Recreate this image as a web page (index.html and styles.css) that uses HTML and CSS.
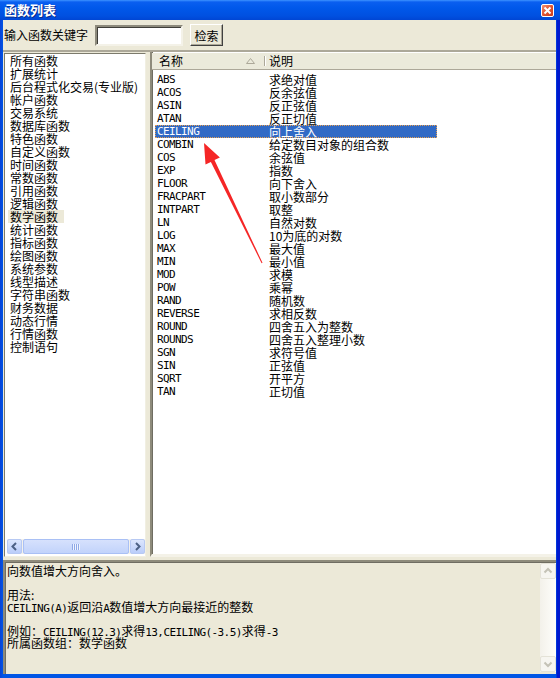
FILE: index.html
```html
<!DOCTYPE html>
<html lang="zh-CN">
  <head>
    <meta charset="UTF-8" />
    <title>函数列表</title>
    <link rel="stylesheet" href="styles.css">
  </head>
  <body>
    <div class="window">
      <div class="titlebar">
        <span class="title">函数列表</span>
        <span class="close">
          <svg width="13" height="13" viewBox="0 0 13 13">
            <defs>
              <linearGradient id="cg" x1="0" y1="0" x2="1" y2="1">
                <stop offset="0" stop-color="#F39678" />
                <stop offset="0.5" stop-color="#E25430" />
                <stop offset="1" stop-color="#C8381A" />
              </linearGradient>
            </defs>
            <rect x="0.5" y="0.5" width="12" height="12" rx="1.5" fill="url(#cg)" stroke="#fff" />
            <path d="M3.5 3.5 L9.5 9.5 M9.5 3.5 L3.5 9.5" stroke="#fff" stroke-width="2" />
          </svg>
        </span>
      </div>

      <div class="body">
        <div class="toolbar">
          <label for="keyword">输入函数关键字</label>
          <input type="text" id="keyword" class="search" />
          <button type="button" class="btn">检索</button>
        </div>

        <div class="main">
          <div class="groups">
            <ul class="group-list">
              <li><span>所有函数</span></li>
              <li><span>扩展统计</span></li>
              <li><span>后台程式化交易(专业版)</span></li>
              <li><span>帐户函数</span></li>
              <li><span>交易系统</span></li>
              <li><span>数据库函数</span></li>
              <li><span>特色函数</span></li>
              <li><span>自定义函数</span></li>
              <li><span>时间函数</span></li>
              <li><span>常数函数</span></li>
              <li><span>引用函数</span></li>
              <li><span>逻辑函数</span></li>
              <li class="current"><span>数学函数</span></li>
              <li><span>统计函数</span></li>
              <li><span>指标函数</span></li>
              <li><span>绘图函数</span></li>
              <li><span>系统参数</span></li>
              <li><span>线型描述</span></li>
              <li><span>字符串函数</span></li>
              <li><span>财务数据</span></li>
              <li><span>动态行情</span></li>
              <li><span>行情函数</span></li>
              <li><span>控制语句</span></li>
            </ul>
            <div class="hscroll">
              <span class="sb-btn">
                <svg width="15" height="15" viewBox="0 0 15 15"><path d="M9 4 L5.5 7.5 L9 11" fill="none" stroke="#4D6185" stroke-width="2" /></svg>
              </span>
              <span class="sb-thumb"><span class="grip"></span></span>
              <span class="sb-btn">
                <svg width="15" height="15" viewBox="0 0 15 15"><path d="M6 4 L9.5 7.5 L6 11" fill="none" stroke="#4D6185" stroke-width="2" /></svg>
              </span>
            </div>
          </div>

          <div class="funcs">
            <div class="head">
              <div class="col-name">
                名称
                <svg class="sort" width="9" height="6" viewBox="0 0 9 6"><path d="M4.5 0.5 L8.5 5.5 L0.5 5.5 Z" fill="none" stroke="#ACA899" /></svg>
              </div>
              <div class="col-desc">说明</div>
            </div>
            <div class="rows">
              <div class="row"><span class="name">ABS</span><span class="info">求绝对值</span></div>
              <div class="row"><span class="name">ACOS</span><span class="info">反余弦值</span></div>
              <div class="row"><span class="name">ASIN</span><span class="info">反正弦值</span></div>
              <div class="row"><span class="name">ATAN</span><span class="info">反正切值</span></div>
              <div class="row selected"><span class="name">CEILING</span><span class="info">向上舍入</span></div>
              <div class="row"><span class="name">COMBIN</span><span class="info">给定数目对象的组合数</span></div>
              <div class="row"><span class="name">COS</span><span class="info">余弦值</span></div>
              <div class="row"><span class="name">EXP</span><span class="info">指数</span></div>
              <div class="row"><span class="name">FLOOR</span><span class="info">向下舍入</span></div>
              <div class="row"><span class="name">FRACPART</span><span class="info">取小数部分</span></div>
              <div class="row"><span class="name">INTPART</span><span class="info">取整</span></div>
              <div class="row"><span class="name">LN</span><span class="info">自然对数</span></div>
              <div class="row"><span class="name">LOG</span><span class="info">10为底的对数</span></div>
              <div class="row"><span class="name">MAX</span><span class="info">最大值</span></div>
              <div class="row"><span class="name">MIN</span><span class="info">最小值</span></div>
              <div class="row"><span class="name">MOD</span><span class="info">求模</span></div>
              <div class="row"><span class="name">POW</span><span class="info">乘幂</span></div>
              <div class="row"><span class="name">RAND</span><span class="info">随机数</span></div>
              <div class="row"><span class="name">REVERSE</span><span class="info">求相反数</span></div>
              <div class="row"><span class="name">ROUND</span><span class="info">四舍五入为整数</span></div>
              <div class="row"><span class="name">ROUNDS</span><span class="info">四舍五入整理小数</span></div>
              <div class="row"><span class="name">SGN</span><span class="info">求符号值</span></div>
              <div class="row"><span class="name">SIN</span><span class="info">正弦值</span></div>
              <div class="row"><span class="name">SQRT</span><span class="info">开平方</span></div>
              <div class="row"><span class="name">TAN</span><span class="info">正切值</span></div>
            </div>
          </div>
        </div>

        <div class="desc">
          <div class="desc-text">
            <p>向数值增大方向舍入。</p>
            <p>&nbsp;</p>
            <p>用法:</p>
            <p><span class="en">CEILING(A)</span>返回沿<span class="en">A</span>数值增大方向最接近的整数</p>
            <p>&nbsp;</p>
            <p>例如：<span class="en">CEILING(12.3)</span>求得<span class="en">13,CEILING(-3.5)</span>求得<span class="en">-3</span></p>
            <p>所属函数组：数学函数</p>
          </div>
          <div class="vscroll">
            <span class="vs-btn">
              <svg width="14" height="14" viewBox="0 0 14 14"><path d="M3.5 8.5 L7 5 L10.5 8.5" fill="none" stroke="#C4C2B6" stroke-width="2" /></svg>
            </span>
            <span class="vs-track"></span>
            <span class="vs-btn">
              <svg width="14" height="14" viewBox="0 0 14 14"><path d="M3.5 5.5 L7 9 L10.5 5.5" fill="none" stroke="#C4C2B6" stroke-width="2" /></svg>
            </span>
          </div>
        </div>
      </div>

      <!-- red pointer drawn over the list -->
      <svg class="arrow" width="560" height="678" viewBox="0 0 560 678">
        <polygon points="204,143 219.9,157.5 214.5,160.1 262.5,262.8 261.6,263.2 210.9,161.9 205.5,164.5" fill="#F52626" />
      </svg>
    </div>
  </body>
</html>
```

FILE: styles.css
```css
* {
  margin: 0;
  padding: 0;
  box-sizing: border-box;
}

body {
  width: 560px;
  height: 678px;
  overflow: hidden;
  font-family: "Noto Sans CJK SC", sans-serif;
  font-size: 12px;
  color: #000;
}

.window {
  position: relative;
  width: 560px;
  height: 678px;
  background: linear-gradient(90deg, #0842D8 0, #0055E5 3px, #0055E5 556px, #0019CF 557px);
  display: flex;
  flex-direction: column;
}

/* Title bar */
.titlebar {
  height: 20px;
  flex: none;
  background: linear-gradient(#3D93FF 0, #0A5FF0 2px, #0058EA 40%, #0050E0 80%, #0046D4 100%);
  display: flex;
  align-items: center;
  justify-content: space-between;
  padding: 0 6px 0 4px;
}

.title {
  color: #fff;
  font-weight: bold;
  font-size: 13px;
  line-height: 20px;
  text-shadow: 1px 1px 0 #0A2C8A;
}

.close {
  display: flex;
  margin-top: 1px;
}

.body {
  flex: 1;
  margin: 0 4px 4px 3px;
  background: #ECE9D8;
  display: flex;
  flex-direction: column;
}

/* Search bar */
.toolbar {
  height: 30px;
  flex: none;
  display: flex;
  align-items: center;
  padding-left: 1px;
}

.toolbar label {
  line-height: 14px;
}

.search {
  margin-left: 7px;
  width: 88px;
  height: 21px;
  border: 2px solid;
  border-color: #8D8A7C #F4F2E8 #F4F2E8 #8D8A7C;
  box-shadow: inset 1px 1px 0 #3F3E38;
  background: #fff;
  outline: none;
}

.btn {
  margin-left: 7px;
  width: 33px;
  height: 22px;
  font-family: "Noto Sans CJK SC", sans-serif;
  font-size: 12px;
  background: #ECE9D8;
  border: 1px solid;
  border-color: #fff #404040 #404040 #fff;
  box-shadow: inset -1px -1px 0 #ACA899;
  color: #000;
}

/* Lists */
.main {
  height: 507px;
  flex: none;
  display: flex;
  border-top: 2px solid #ACA899;
}

.groups {
  width: 142px;
  margin: 1px 0 0 1px;
  background: #fff;
  border: 1px solid;
  border-color: #7C7A6C #F1EFE2 #F1EFE2 #7C7A6C;
  display: flex;
  flex-direction: column;
}

.group-list {
  flex: 1;
  list-style: none;
  padding-left: 3px;
}

.group-list li {
  height: 13px;
  line-height: 13px;
  white-space: nowrap;
}

.group-list li span {
  display: inline-block;
  padding: 0 6px 0 2px;
}

.group-list li.current span {
  background: #ECE9D8;
}

.hscroll {
  height: 15px;
  margin: 0 0 2px 2px;
  display: flex;
  background: #F3F1EC;
}

.sb-btn {
  width: 15px;
  height: 15px;
  display: flex;
  border: 1px solid #B7C9F3;
  border-radius: 2px;
  background: linear-gradient(#DCE6FD, #BACDFA);
}

.sb-btn svg {
  margin: -1px;
}

.sb-thumb {
  flex: 1;
  margin: 0 1px;
  border: 1px solid #A9C0F5;
  border-radius: 2px;
  background: linear-gradient(#D6E1FD, #C2D3FB);
  display: flex;
  justify-content: center;
  align-items: center;
}

.grip {
  width: 8px;
  height: 6px;
  background: repeating-linear-gradient(90deg, #8FA8E6 0, #8FA8E6 1px, #EEF3FF 1px, #EEF3FF 2px);
}

.funcs {
  flex: 1;
  margin-left: 4px;
  background: #fff;
  border-left: 2px solid;
  border-color: #8E8B7B;
  box-shadow: inset 1px 0 0 #6F6D62;
  border-bottom: 3px solid #F4F2E8;
}

.head {
  height: 17px;
  margin-top: 1px;
  display: flex;
  background: #EBEADB;
  border-bottom: 1px solid #ACA899;
  line-height: 16px;
}

.col-name {
  width: 112px;
  padding-left: 7px;
  display: flex;
  align-items: center;
}

.sort {
  margin-left: auto;
  margin-right: 9px;
}

.col-desc {
  padding-left: 4px;
  margin: 3px 0;
  line-height: 10px;
  border-left: 1px solid #ACA899;
  box-shadow: inset 1px 0 0 #fff;
  display: flex;
  align-items: center;
}

.rows {
  padding: 3px 0 0 3px;
}

.row {
  width: 282px;
  height: 13px;
  line-height: 13px;
  display: flex;
  white-space: nowrap;
}

.row .name {
  width: 113px;
  padding-left: 2px;
  font-family: "DejaVu Sans Mono", monospace;
  font-size: 11px;
  letter-spacing: -0.6px;
}

.row .info {
  padding-left: 1px;
}

.row.selected {
  background: #316AC5;
  color: #fff;
  outline: 1px dotted #E8A050;
  outline-offset: -1px;
}

/* Description pane */
.desc {
  flex: 1;
  margin-top: 3px;
  display: flex;
  border-top: 2px solid;
  border-left: 2px solid;
  border-color: #8E8B7B;
  box-shadow: inset 1px 1px 0 #6F6D62;
}

.desc-text {
  flex: 1;
  padding: 3px 0 0 2px;
}

.desc-text p {
  height: 12px;
  line-height: 12px;
  white-space: nowrap;
}

.en {
  font-family: "DejaVu Sans Mono", monospace;
  font-size: 11px;
  letter-spacing: -0.6px;
}

.vscroll {
  width: 16px;
  margin: 1px 0 2px;
  display: flex;
  flex-direction: column;
  background: linear-gradient(90deg, #F3F1EA, #FEFEFB);
}

.vs-btn {
  width: 16px;
  height: 16px;
  display: flex;
  align-items: center;
  justify-content: center;
  border: 1px solid #E4E2D7;
  border-radius: 2px;
  background: #F6F5F0;
}

.vs-track {
  flex: 1;
}

.arrow {
  position: absolute;
  top: 0;
  left: 0;
  pointer-events: none;
}
```
